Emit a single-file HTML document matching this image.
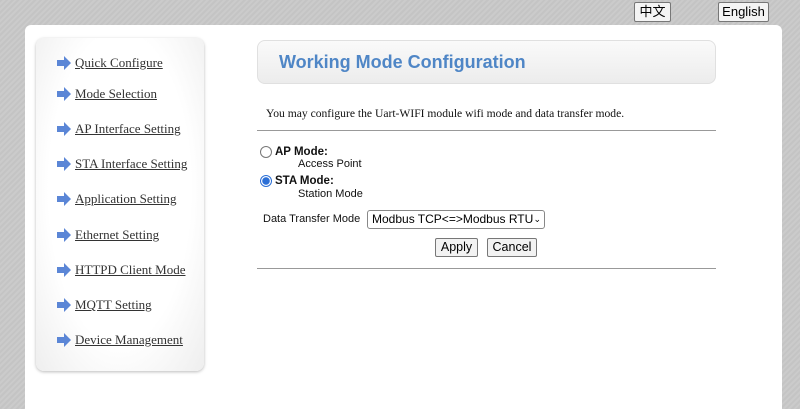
<!DOCTYPE html>
<html><head><meta charset="utf-8"><style>
*{margin:0;padding:0;box-sizing:border-box}
html,body{width:800px;height:409px;overflow:hidden}
body{position:relative;background:repeating-linear-gradient(135deg,#c4c4c4 0 2px,#cbcbcb 2px 4px);font-family:"Liberation Sans",sans-serif}
.lang{position:absolute;top:2px;height:20px;border:1px solid #777;border-radius:2px;background:#f4f4f4;font-size:13px;line-height:18px;text-align:center;color:#000}
.main{position:absolute;left:25px;top:25px;width:757px;height:384px;background:#fff;border-radius:6px 6px 0 0}
.side{position:absolute;left:36px;top:38px;width:168px;height:333px;border-radius:8px;background:radial-gradient(ellipse at 50% 45%,#fff 60%,#eee 100%);box-shadow:0 1px 3px #bbb}
.item{position:absolute;left:56px;font-family:"Liberation Serif",serif;font-size:13px;color:#333;text-decoration:underline;white-space:nowrap}
.item svg{position:absolute;left:0;top:1px}
.item span{margin-left:19px}
.title{position:absolute;left:257px;top:40px;width:459px;height:44px;border-radius:8px;background:linear-gradient(#fafafa,#ececec);border:1px solid #e0e0e0;color:#4f86c6;font-weight:bold;font-size:18px;line-height:42px;padding-left:21px}
.t{position:absolute;font-size:11.5px;color:#111}
hr{position:absolute;border:0;height:1px;background:#999}
.radio{position:absolute;width:12px;height:12px;border-radius:50%;border:1px solid #777;background:#fff}
.btn{position:absolute;height:19px;border:1px solid #777;border-radius:2px;background:#f2f2f2;font-size:12.5px;line-height:17px;text-align:center;color:#000}
</style></head><body>
<div class="lang" style="left:634px;width:37px;font-family:'Liberation Sans','Noto Sans CJK SC',sans-serif">中文</div>
<div class="lang" style="left:718px;width:51px">English</div>
<div class="main"></div>
<div class="side"></div>
<div class="title">Working Mode Configuration</div>

<div class="item" style="top:55px"><svg width="16" height="14" viewBox="0 0 16 14"><path d="M1 4h7V0l7 7-7 7V10H1z" fill="#5b86d6"/></svg><span>Quick Configure</span></div>
<div class="item" style="top:86px"><svg width="16" height="14" viewBox="0 0 16 14"><path d="M1 4h7V0l7 7-7 7V10H1z" fill="#5b86d6"/></svg><span>Mode Selection</span></div>
<div class="item" style="top:121px"><svg width="16" height="14" viewBox="0 0 16 14"><path d="M1 4h7V0l7 7-7 7V10H1z" fill="#5b86d6"/></svg><span>AP Interface Setting</span></div>
<div class="item" style="top:156px"><svg width="16" height="14" viewBox="0 0 16 14"><path d="M1 4h7V0l7 7-7 7V10H1z" fill="#5b86d6"/></svg><span>STA Interface Setting</span></div>
<div class="item" style="top:191px"><svg width="16" height="14" viewBox="0 0 16 14"><path d="M1 4h7V0l7 7-7 7V10H1z" fill="#5b86d6"/></svg><span>Application Setting</span></div>
<div class="item" style="top:227px"><svg width="16" height="14" viewBox="0 0 16 14"><path d="M1 4h7V0l7 7-7 7V10H1z" fill="#5b86d6"/></svg><span>Ethernet Setting</span></div>
<div class="item" style="top:262px"><svg width="16" height="14" viewBox="0 0 16 14"><path d="M1 4h7V0l7 7-7 7V10H1z" fill="#5b86d6"/></svg><span>HTTPD Client Mode</span></div>
<div class="item" style="top:297px"><svg width="16" height="14" viewBox="0 0 16 14"><path d="M1 4h7V0l7 7-7 7V10H1z" fill="#5b86d6"/></svg><span>MQTT Setting</span></div>
<div class="item" style="top:332px"><svg width="16" height="14" viewBox="0 0 16 14"><path d="M1 4h7V0l7 7-7 7V10H1z" fill="#5b86d6"/></svg><span>Device Management</span></div>

<div class="t" style="left:266px;top:107px;font-family:'Liberation Serif',serif;font-size:11.6px">You may configure the Uart-WIFI module wifi mode and data transfer mode.</div>
<hr style="left:257px;top:130px;width:459px">
<div class="radio" style="left:260px;top:146px"></div>
<div class="t" style="left:275px;top:146px;font-weight:bold">AP Mode:</div>
<div class="t" style="left:298px;top:158px;font-size:11px">Access Point</div>
<div class="radio" style="left:260px;top:175px;border:1px solid #2b6fd6;background:radial-gradient(circle,#2b6fd6 3.5px,#fff 4px)"></div>
<div class="t" style="left:275px;top:175px;font-weight:bold">STA Mode:</div>
<div class="t" style="left:298px;top:188px;font-size:11px">Station Mode</div>
<div class="t" style="left:263px;top:213px;font-size:11px">Data Transfer Mode</div>
<div style="position:absolute;left:367px;top:210px;width:178px;height:19px;border:1px solid #888;border-radius:3px;background:#fff;font-size:12px;line-height:17px;padding-left:4px;white-space:nowrap;overflow:hidden">Modbus TCP&lt;=&gt;Modbus RTU<span style="font-size:9px;position:absolute;right:3px;top:0;background:#fff">&#8964;</span></div>
<div class="btn" style="left:435px;top:238px;width:43px">Apply</div>
<div class="btn" style="left:487px;top:238px;width:50px">Cancel</div>
<hr style="left:257px;top:268px;width:459px">
</body></html>
